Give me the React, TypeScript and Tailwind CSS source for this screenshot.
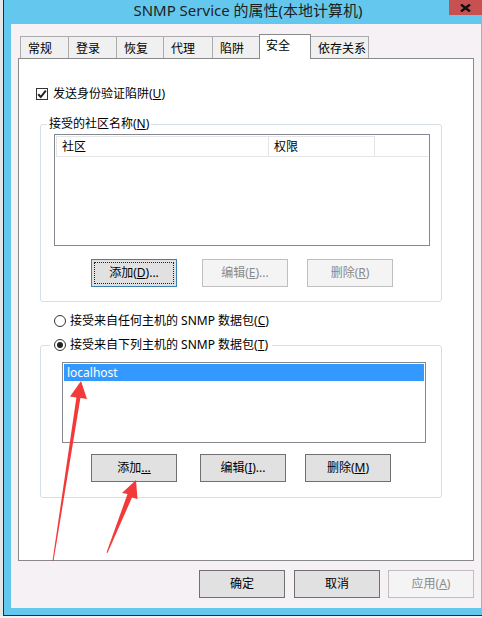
import type { ReactNode } from 'react';

type BtnKind = 'normal' | 'disabled' | 'focused';

function Btn({ children, kind = 'normal', className = '' }: { children: ReactNode; kind?: BtnKind; className?: string }) {
  const look =
    kind === 'disabled'
      ? 'border-[#bfbfbf] bg-[#f4f4f4] text-[#8a8a8a]'
      : kind === 'focused'
        ? 'border-[#3c7fb1] bg-[#e1e1e1] text-black'
        : 'border-[#707070] bg-[#e1e1e1] text-black';
  return (
    <div className={`flex h-[28px] w-[86px] shrink-0 border text-[12px] leading-[16px] ${look} ${className}`}>
      {kind === 'focused' ? (
        <div className="m-[2px] flex flex-1 items-center justify-center border border-dotted border-[#222]">{children}</div>
      ) : (
        <div className="flex flex-1 items-center justify-center">{children}</div>
      )}
    </div>
  );
}

function Tab({ label, width, selected = false, first = false }: { label: string; width: string; selected?: boolean; first?: boolean }) {
  if (selected) {
    return (
      <div className={`relative z-10 -mb-px -ml-px flex h-[25px] items-start border-x border-t border-[#898989] bg-white pl-[6px] pt-[3px] ${width}`}>
        {label}
      </div>
    );
  }
  return (
    <div className={`flex h-[22px] items-center border-x border-t border-[#acacac] bg-[#f0f0f0] pl-[7px] pt-[2px] ${first ? '' : '-ml-px'} ${width}`}>
      {label}
    </div>
  );
}

function Radio({ checked = false }: { checked?: boolean }) {
  return (
    <div className="flex h-[12px] w-[12px] shrink-0 items-center justify-center rounded-full border border-[#333] bg-white">
      {checked && <div className="h-[6px] w-[6px] rounded-full bg-[#222]" />}
    </div>
  );
}

export default function App() {
  return (
    <div className="relative h-[618px] w-[482px] overflow-hidden bg-[#f2f2f2] font-['Noto_Sans','Noto_Sans_CJK_SC',sans-serif] text-[12px] leading-[16px] text-black">
      <div className="flex h-[616px]">
        <div className="w-[3px] bg-[#e4e6e8]" />
        <div className="flex flex-1 flex-col border-b border-l border-[#2a2a2a] bg-[#64c8ee]">
          {/* title bar */}
          <div className="relative flex h-[24px] justify-center pl-[10px] pt-[1px] text-[15px] leading-[18px] text-[#1e1e1e]">
            <span>SNMP Service 的属性(本地计算机)</span>
            <div className="absolute right-0 top-0 flex h-[15px] w-[33px] items-center justify-center bg-[#c75050]">
              <svg width="11" height="8" viewBox="0 0 11 8">
                <path d="M1 0.5 L10 7.5 M10 0.5 L1 7.5" stroke="#111" strokeWidth="2.4" />
              </svg>
            </div>
          </div>

          {/* client area */}
          <div className="ml-[7px] mr-[1px] flex h-[584px] flex-col bg-[#f5f1f5]">
            <div className="ml-[9px] mt-[10px] flex h-[24px] items-end">
              <Tab label="常规" width="w-[49px]" first />
              <Tab label="登录" width="w-[49px]" />
              <Tab label="恢复" width="w-[48px]" />
              <Tab label="代理" width="w-[50px]" />
              <Tab label="陷阱" width="w-[48px]" />
              <Tab label="安全" width="w-[52px]" selected />
              <Tab label="依存关系" width="w-[59px]" />
            </div>

            <div className="ml-[7px] flex h-[503px] w-[456px] flex-col border border-[#898989] bg-white">
              <div className="ml-[17px] mt-[27px] flex h-[16px] items-center gap-[5px]">
                <div className="flex h-[12px] w-[12px] items-center justify-center border border-[#333] bg-white">
                  <svg width="10" height="10" viewBox="0 0 10 10">
                    <path d="M1.2 5.2 L3.8 8 L8.8 1.6" fill="none" stroke="#222" strokeWidth="2" />
                  </svg>
                </div>
                <span>
                  发送身份验证陷阱(<u>U</u>)
                </span>
              </div>

              <fieldset className="ml-[21px] mt-[14px] w-[402px] rounded-[3px] border border-[#d5dfe5] pb-[14px]">
                <legend className="ml-[6px] px-[2px] leading-[16px]">
                  接受的社区名称(<u>N</u>)
                </legend>
                <div className="ml-[13px] mt-[2px]">
                  <div className="h-[112px] w-[376px] border border-[#828790] bg-white">
                    <div className="mx-[1px] mt-[1px] flex h-[21px] border-b border-[#e5e5e5]">
                      <div className="flex w-[213px] items-center border-x border-t border-[#e5e5e5] pl-[5px]">社区</div>
                      <div className="flex w-[106px] items-center border-r border-t border-[#e5e5e5] pl-[5px]">权限</div>
                    </div>
                  </div>
                  <div className="mt-[13px] flex">
                    <Btn kind="focused" className="ml-[37px]">
                      添加(<u>D</u>)...
                    </Btn>
                    <Btn kind="disabled" className="ml-[25px]">
                      编辑(<u>E</u>)...
                    </Btn>
                    <Btn kind="disabled" className="ml-[19px]">
                      删除(<u>R</u>)
                    </Btn>
                  </div>
                </div>
              </fieldset>

              <div className="ml-[35px] mt-[11px] flex h-[16px] items-center gap-[4px]">
                <Radio />
                <span>
                  接受来自任何主机的 SNMP 数据包(<u>C</u>)
                </span>
              </div>

              <fieldset className="ml-[21px] mt-[8px] w-[402px] rounded-[3px] border border-[#d5dfe5] pb-[15px]">
                <legend className="ml-[9px] flex items-center gap-[4px] px-[4px] leading-[16px]">
                  <Radio checked />
                  <span>
                    接受来自下列主机的 SNMP 数据包(<u>T</u>)
                  </span>
                </legend>
                <div className="ml-[21px] mt-[9px]">
                  <div className="h-[81px] w-[364px] border border-[#828790] bg-white p-[1px]">
                    <div className="flex h-[17px] items-center bg-[#3399ff] pl-[3px] text-white">localhost</div>
                  </div>
                  <div className="mt-[11px] flex">
                    <Btn className="ml-[29px]">
                      添加<u>...</u>
                    </Btn>
                    <Btn className="ml-[23px]">
                      编辑(<u>I</u>)...
                    </Btn>
                    <Btn className="ml-[19px]">
                      删除(<u>M</u>)
                    </Btn>
                  </div>
                </div>
              </fieldset>
            </div>

            <div className="ml-[188px] mt-[9px] flex">
              <Btn>确定</Btn>
              <Btn className="ml-[9px]">取消</Btn>
              <Btn kind="disabled" className="ml-[8px]">
                应用(<u>A</u>)
              </Btn>
            </div>
          </div>
        </div>
      </div>

      {/* red annotation arrows */}
      <svg className="pointer-events-none absolute left-0 top-0" width="482" height="618" viewBox="0 0 482 618">
        <polygon points="81,381 87,399 80.4,398.1 53.5,561 52.5,561 76.4,397.5 70,396.5" fill="#f23a3a" />
        <polygon points="136,480 137.5,499 132,497.5 107.5,553 106.5,552.5 127.5,494 122,493" fill="#f23a3a" />
      </svg>
    </div>
  );
}
